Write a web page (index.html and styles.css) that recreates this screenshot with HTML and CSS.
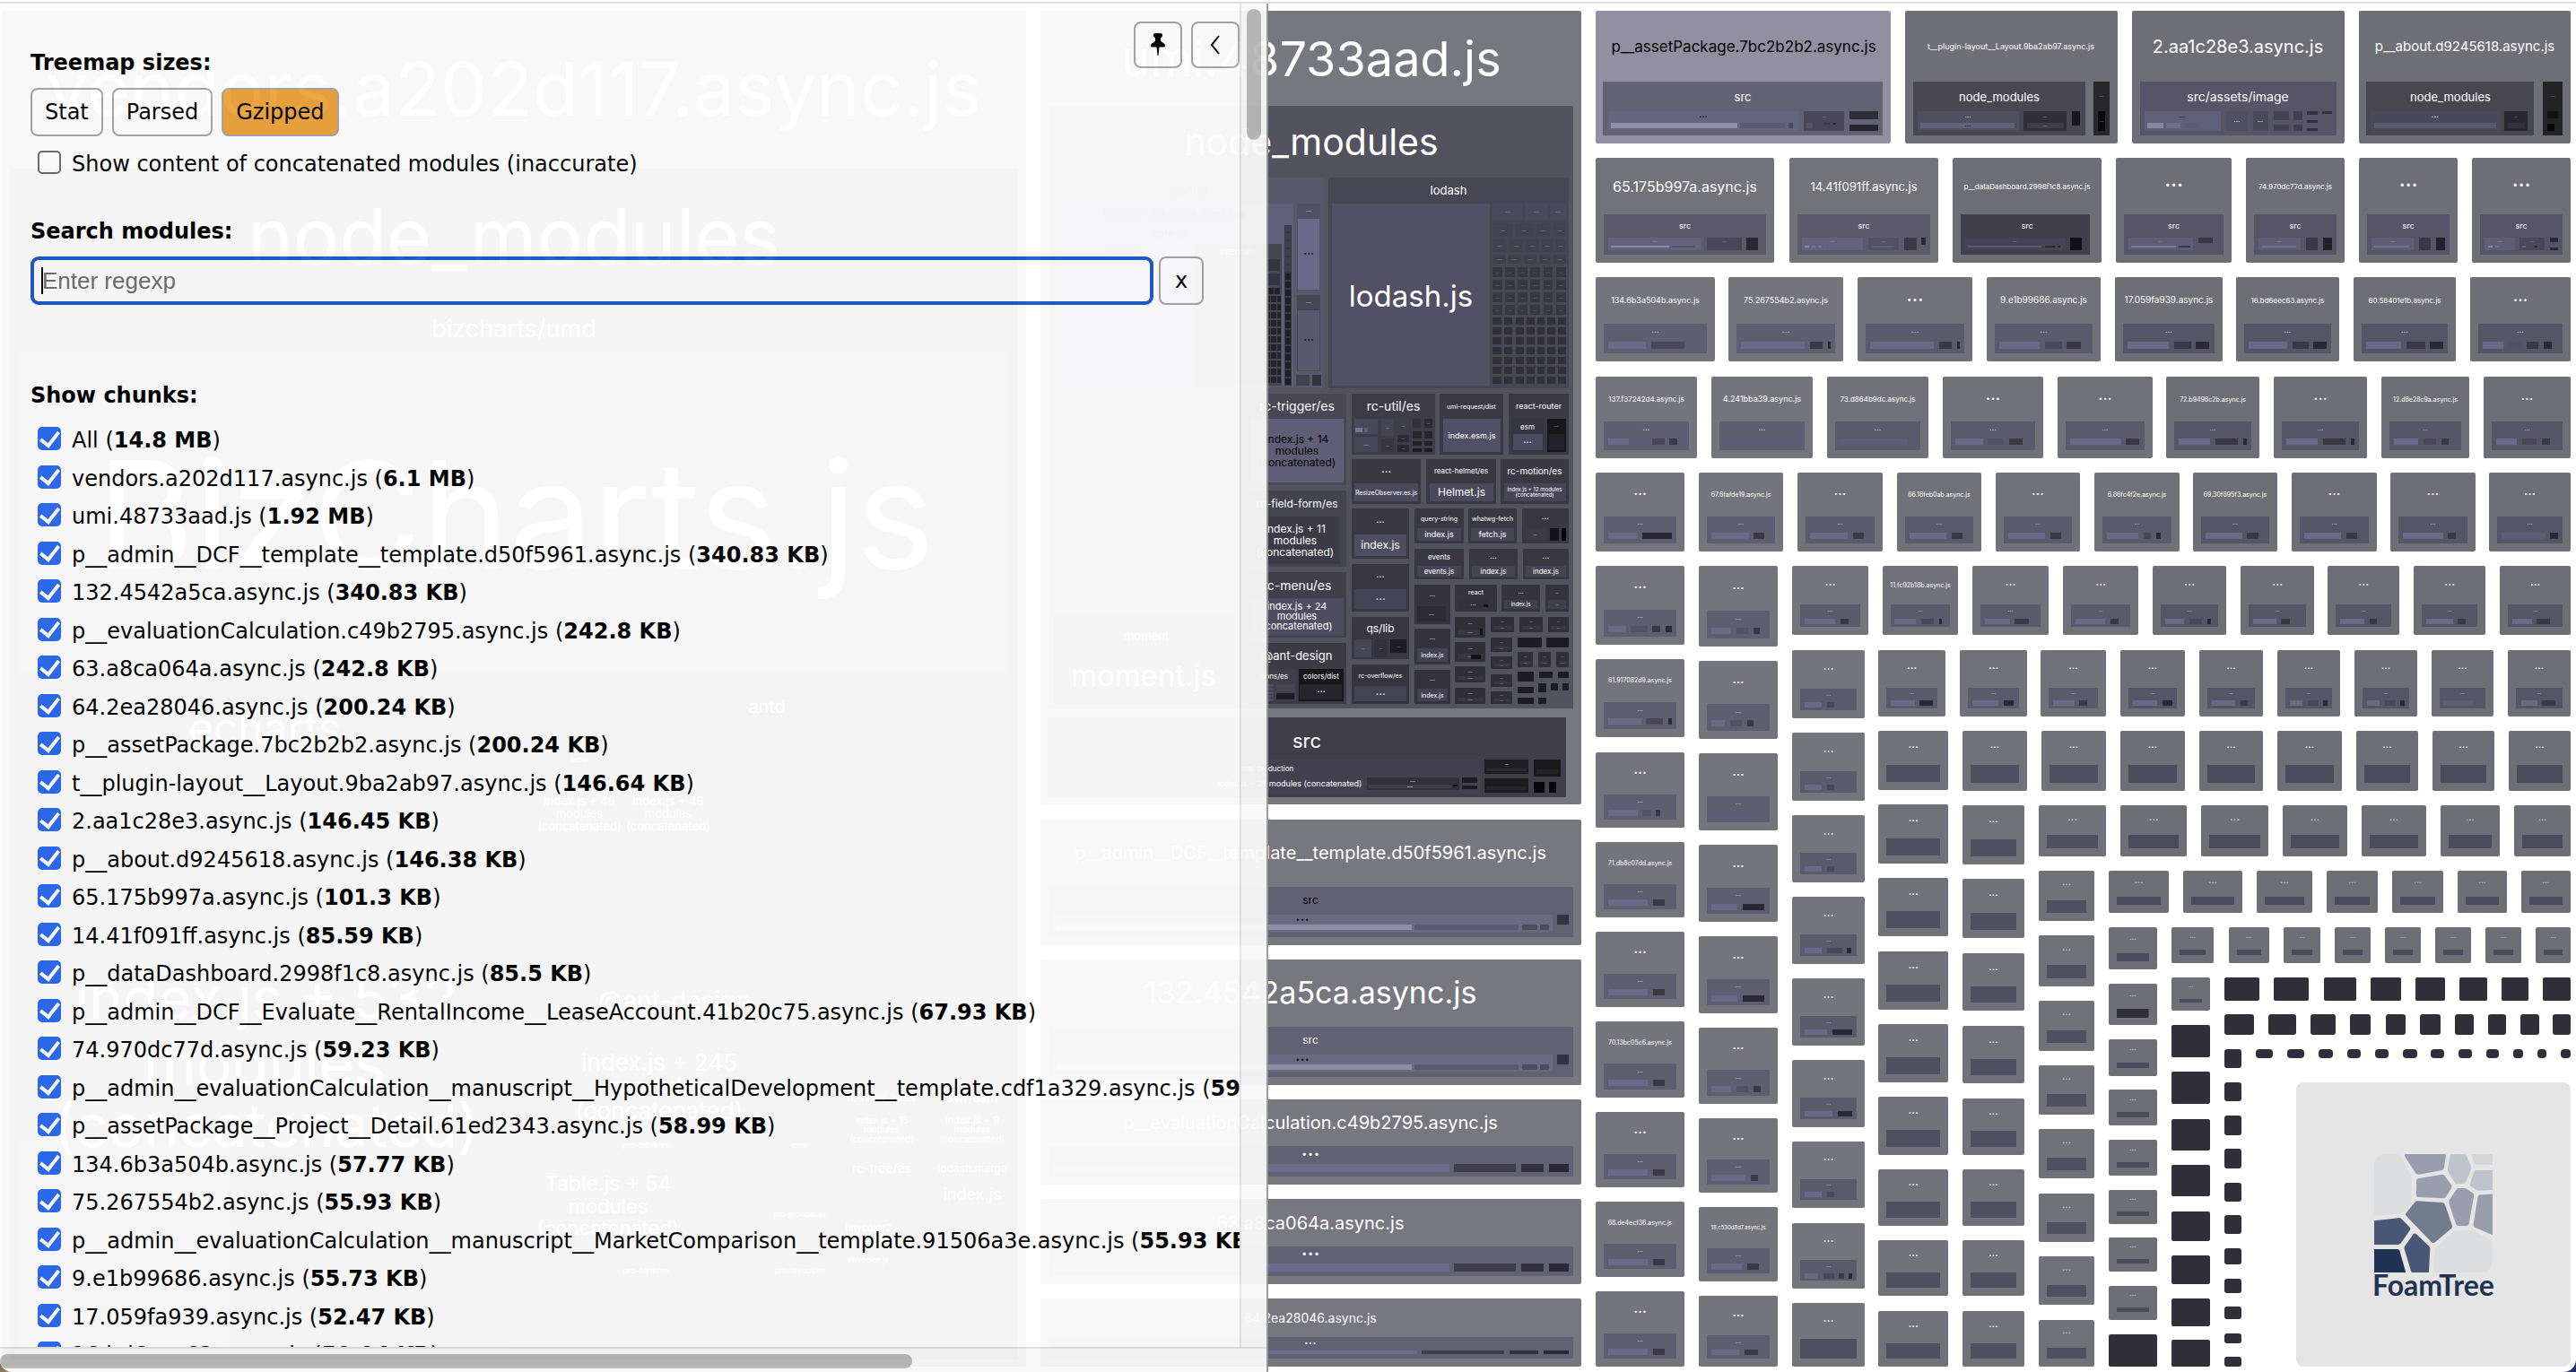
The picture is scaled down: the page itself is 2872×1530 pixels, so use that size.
FILE: index.html
```html
<!DOCTYPE html>
<html lang="en">
<head>
<meta charset="utf-8">
<title>Webpack Bundle Analyzer</title>
<link rel="stylesheet" href="styles.css">
</head>
<body>
<div class="app">
  <main class="treemap">
    <svg id="treemap" class="treemap-canvas" viewBox="0 0 2872 1526" preserveAspectRatio="xMinYMin meet" role="img" aria-label="Bundle treemap"></svg>
  </main>

  <aside class="sidebar">
    <div class="sidebar-body">
      <div class="toolbar">
        <button class="icon-button" type="button" aria-label="Pin sidebar">
          <svg width="16" height="26" viewBox="0 0 16 26"><path d="M3 2q0-2 2-2h6q2 0 2 2v1q0 1.500-2 2v4l3 2q2 1 2 3 0 1.500-2 1.500H9.500L8.500 25h-1l-1-9.500H2Q0 15.500 0 14q0-2 2-3l3-2V5Q3 4.500 3 3z"/></svg>
        </button>
        <button class="icon-button" type="button" aria-label="Hide sidebar">
          <svg width="12" height="22" viewBox="0 0 12 22"><path d="M10 1L2 11l8 10" fill="none" stroke="#000" stroke-width="2"/></svg>
        </button>
      </div>

      <section class="group sizes">
        <h2 class="group-title">Treemap sizes:</h2>
        <div class="size-buttons">
          <button class="button" type="button">Stat</button>
          <button class="button" type="button">Parsed</button>
          <button class="button active" type="button">Gzipped</button>
        </div>
        <label class="option"><input class="box" type="checkbox"><span>Show content of concatenated modules (inaccurate)</span></label>
      </section>

      <section class="group search">
        <h2 class="group-title"><label for="search">Search modules:</label></h2>
        <div class="search-row">
          <div class="search-field"><input id="search" class="search-input" type="text" placeholder="Enter regexp"></div>
          <button class="button clear" type="button" aria-label="Clear search">x</button>
        </div>
      </section>

      <section class="group chunks">
        <h2 class="group-title">Show chunks:</h2>
        <ul id="chunks" class="chunk-list"></ul>
      </section>
    </div>
    <div class="scroll-y"><div class="thumb"></div></div>
    <div class="scroll-x"><div class="thumb"></div></div>
  </aside>
</div>
<script src="treemap.js"></script>
</body>
</html>
```

FILE: styles.css
```css
* {
  box-sizing: border-box;
}

html {
  height: 100%;
  background: linear-gradient(to right, #8a7a5a 50%, #1c2f66 50%);
}

body {
  height: 100%;
  margin: 0;
  font: 24px/32px "DejaVu Sans", Verdana, sans-serif;
  color: #000;
}

.app {
  position: relative;
  height: 100%;
  overflow: hidden;
  padding-top: 2px;
  background: #fff;
  border-radius: 0 0 14px 14px;
}

.treemap {
  border-top: 2px solid #ddd;
  height: 100%;
}

.treemap-canvas {
  display: block;
  width: 100%;
  font-family: Inter, "Liberation Sans", sans-serif;
}

.treemap-canvas text {
  text-anchor: middle;
}

.treemap-canvas .brand {
  font-family: Lato, sans-serif;
  font-weight: 700;
}

/* Sidebar lies over the treemap and lets it shimmer through */
.sidebar {
  position: absolute;
  top: 4px;
  bottom: 0;
  left: 0;
  width: calc(50% - 22px);
  display: grid;
  grid-template: "body bar" minmax(0, 1fr) "foot foot" 28px / minmax(0, 1fr) 30px;
  background: #fff;
  border-right: 2px solid #999;
  opacity: 0.95;
}

.sidebar-body {
  grid-area: body;
  position: relative;
  overflow: hidden;
  padding: 18px 40px 0 34px;
}

.toolbar {
  position: absolute;
  top: 20px;
  right: 0;
  display: flex;
  gap: 10px;
}

.icon-button {
  display: grid;
  place-items: center;
  width: 54px;
  height: 52px;
  padding: 0;
  background: none;
  border: 2px solid #a5a5a5;
  border-radius: 8px;
}

.group-title {
  margin: 0;
  font-size: 24px;
  font-weight: 700;
  line-height: 32px;
}

.sizes {
  padding-top: 32px;
}

.size-buttons {
  display: flex;
  gap: 10px;
  margin-top: 12px;
}

.button {
  height: 54px;
  padding: 0 14px;
  background: none;
  border: 2px solid #a5a5a5;
  border-radius: 8px;
  font: inherit;
  color: #000;
}

.button.active {
  background: #eba238;
}

.option {
  display: flex;
  align-items: center;
  gap: 12px;
  height: 42px;
  padding-left: 8px;
  white-space: nowrap;
}

.sizes .option {
  margin-top: 10px;
}

.box {
  appearance: none;
  display: grid;
  place-items: center;
  flex: none;
  width: 26px;
  height: 26px;
  margin: 0 0 4px;
  background: #fff;
  border: 2px solid #6b6b6b;
  border-radius: 5px;
}

.box:checked {
  border: 0;
  background: #2a69ee;
}

.box:checked::before {
  content: "";
  width: 9px;
  height: 17px;
  margin-bottom: 4px;
  border: solid #fff;
  border-width: 0 4px 4px 0;
  transform: rotate(38deg);
}

.search {
  padding-top: 38px;
}

.search-row {
  display: flex;
  gap: 6px;
  margin-top: 12px;
}

.search-field {
  position: relative;
  flex: 1;
}

.search-field::before {
  content: "";
  position: absolute;
  top: 12px;
  left: 12px;
  width: 2px;
  height: 30px;
  background: #000;
}

.search-input {
  display: block;
  width: 100%;
  height: 54px;
  padding: 0 9px;
  background: none;
  border: 4px solid #1d59c6;
  border-radius: 9px;
  font: 26px "Liberation Sans", Arial, sans-serif;
}

.search-input::placeholder {
  color: #6e6e6e;
  opacity: 1;
}

.clear {
  width: 50px;
  padding: 0;
}

.chunks {
  padding-top: 85px;
}

.chunk-list {
  margin: 13px 0 0;
  padding: 0;
  list-style: none;
}

.chunk-list .option {
  height: 42px;
}

.chunk-list li:nth-child(even) .option {
  height: 43px;
}

.scroll-y {
  grid-area: bar;
  padding: 6px 6px 0;
  background: #f9f9f9;
  border-left: 2px solid #e4e4e4;
}

.scroll-x {
  grid-area: foot;
  padding: 6px 0 0;
  background: #f9f9f9;
  border-top: 2px solid #e0e0e0;
}

.thumb {
  background: #b8b8b8;
  border-radius: 8px;
}

.scroll-y .thumb {
  width: 16px;
  height: 146px;
}

.scroll-x .thumb {
  width: 72%;
  height: 16px;
}
```

FILE: treemap.js
```js
const chunks = [
  ["All", "14.8 MB"],
  ["vendors.a202d117.async.js", "6.1 MB"],
  ["umi.48733aad.js", "1.92 MB"],
  ["p__admin__DCF__template__template.d50f5961.async.js", "340.83 KB"],
  ["132.4542a5ca.async.js", "340.83 KB"],
  ["p__evaluationCalculation.c49b2795.async.js", "242.8 KB"],
  ["63.a8ca064a.async.js", "242.8 KB"],
  ["64.2ea28046.async.js", "200.24 KB"],
  ["p__assetPackage.7bc2b2b2.async.js", "200.24 KB"],
  ["t__plugin-layout__Layout.9ba2ab97.async.js", "146.64 KB"],
  ["2.aa1c28e3.async.js", "146.45 KB"],
  ["p__about.d9245618.async.js", "146.38 KB"],
  ["65.175b997a.async.js", "101.3 KB"],
  ["14.41f091ff.async.js", "85.59 KB"],
  ["p__dataDashboard.2998f1c8.async.js", "85.5 KB"],
  ["p__admin__DCF__Evaluate__RentalIncome__LeaseAccount.41b20c75.async.js", "67.93 KB"],
  ["74.970dc77d.async.js", "59.23 KB"],
  ["p__admin__evaluationCalculation__manuscript__HypotheticalDevelopment__template.cdf1a329.async.js", "59.12 KB"],
  ["p__assetPackage__Project__Detail.61ed2343.async.js", "58.99 KB"],
  ["134.6b3a504b.async.js", "57.77 KB"],
  ["75.267554b2.async.js", "55.93 KB"],
  ["p__admin__evaluationCalculation__manuscript__MarketComparison__template.91506a3e.async.js", "55.93 KB"],
  ["9.e1b99686.async.js", "55.73 KB"],
  ["17.059fa939.async.js", "52.47 KB"],
  ["16.bd6eec63.async.js", "50.94 KB"]
];

document.getElementById("chunks").innerHTML = chunks.map(([name, size]) =>
  `<li><label class="option"><input class="box" type="checkbox" checked><span>${name} (<b>${size}</b>)</span></label></li>`
).join("");

/* ---- treemap drawing ---- */
const FONT = 'Inter, "Liberation Sans", sans-serif';
const pen = document.createElement("canvas").getContext("2d");
pen.font = "100px " + FONT;
const out = [];

// Bar shades, from the lightest module to the darkest
const SHADE = { H: "#8d8ba2", L: "#6b6987", l: "#5e5c76", m: "#525165", M: "#4a4858", D: "#3a3844", K: "#2a2832", k: "#121116" };
const shade = c => SHADE[c] || c;

// Rectangle from its left, top, right and bottom edges
function box(x1, y1, x2, y2, color, r = 0) {
  out.push(`<rect x="${x1}" y="${y1}" width="${x2 - x1}" height="${y2 - y1}" rx="${r}" fill="${shade(color)}"/>`);
}

// Text centred on a point
function text(str, cx, cy, size, color = "#fff") {
  out.push(`<text x="${cx}" y="${Math.round(cy + size * 0.36)}" font-size="${size}" fill="${color}">${str}</text>`);
}

// Label set in the whole size at which it takes up the given width
function fit(str, cx, cy, width, color) {
  const size = 100 * width / pen.measureText(str).width;
  text(str, cx, cy, size < 12 ? Math.round(size + 0.3) : Math.round(size), color);
}

function dots(cx, cy, size, color = "#fff", opacity = 1) {
  out.push(`<text x="${cx}" y="${Math.round(cy + 1)}" font-size="${Math.max(4, Math.round(size))}" fill="${color}" opacity="${opacity}">…</text>`);
}

// A chunk whose folder holds a few bars
function cell(x1, y1, x2, y2, label, labelWidth, bars) {
  const w = x2 - x1, h = y2 - y1, cx = (x1 + x2) / 2;
  const grey = x1 < 2000 ? "#74747d" : x1 < 2350 ? "#717179" : "#6e6e76";
  box(x1, y1, x2, y2, grey, 2);
  const size = Math.min(w * 0.17, h * 0.25);
  const cy = y1 + h * 0.275;
  if (label) fit(label, cx, cy, labelWidth);
  else dots(cx, cy, size, "#fff", h > 60 ? 1 : 0.6);
  const top = Math.round(y1 + h * 0.49 + 5.5);
  if (!bars) {
    box(x1 + 9, top, x2 - 9, y2 - 9, x1 < 2300 ? "#504f62" : "#4c4b5d");
    return;
  }
  box(x1 + 9, top, x2 - 9, y2 - 9, x1 < 1990 ? "#5f5e70" : x1 < 2350 ? "#5b5a6a" : "#565565");
  dots(cx, y1 + h * 0.653, size * 0.45, "#fff", 0.7);
  const by = Math.round(y1 + h * 0.762), bh = Math.round(h * 0.08);
  bars.split(" ").forEach(b => {
    const [a, e] = b.slice(1).split("-").map(Number);
    box(a, by, e, by + bh, b[0]);
  });
}

const row = (y1, y2, cells) => cells.forEach(c => cell(c[0], y1, c[1], y2, c[2], c[3], c[4]));
const column = (x1, x2, cells) => cells.forEach(c => cell(x1, c[0], x2, c[1], c[2], c[3], c[4]));
const plain = list => list.split(" ").map(s => s.split("-").map(Number));

/* vendors */
box(2, 12, 1144, 1524, "#777780", 2);
fit("vendors.a202d117.async.js", 573, 99, 1037);
box(11, 188, 1135, 1516, "#3f3e47");
fit("node_modules", 573, 264, 594);
box(18, 340, 1128, 753, "#4a4955");
fit("bizcharts/umd", 573, 366, 182);
box(20, 391, 1124, 750, "#5b5b6e");
fit("BizCharts.js", 575, 574, 936);
box(18, 762, 572, 1510, "#43424e");
fit("echarts", 295, 812, 170);
box(22, 856, 568, 1506, "#4d4c60");
fit("index.js + 532", 297, 1113, 424);
fit("modules", 295, 1186, 270);
fit("(concatenated)", 297, 1255, 474);
box(580, 762, 1128, 1080, "#3b3a45");
fit("antd", 855, 788, 41);
fit("table", 646, 847, 17);
[646, 745].forEach(x => {
  box(x - 48, 856, x + 46, 945, "#4a4959");
  fit("index.js + 46", x, 893, 77);
  fit("modules", x, 907, 51);
  fit("(concatenated)", x, 921, 91);
});
for (let y = 956; y < 1060; y += 56)
  for (let x = 590; x < 1100; x += 88) box(x, y, x + 76, y + 46, "#4a4959");
box(580, 1090, 924, 1510, "#43424e");
text("@ant-design", 752, 1116, 28);
box(590, 1145, 920, 1260, "#4d4c60");
fit("index.js + 245", 735, 1185, 177);
fit("modules", 735, 1211, 110);
fit("(concatenated)", 735, 1239, 187);
box(590, 1284, 766, 1400, "#4d4c60");
fit("pro-table/es", 720, 1277, 48);
fit("icons", 892, 1277, 20);
fit("Table.js + 54", 678, 1320, 141);
fit("modules", 678, 1345, 90);
fit("(concatenated)", 678, 1369, 161);
fit("pro-provider/es", 892, 1354, 56);
fit("pro-form/es", 720, 1417, 48);
fit("pro-layout/es", 892, 1417, 53);
box(934, 1090, 1128, 1510, "#43424e");
[[983, "rc-virtual-list/es", "index.js + 15", 77], [1084, "swr/esm", "index.js + 9", 55]].forEach(([x, a, b, w]) => {
  fit(a, x, 1224, w);
  fit(b, x, 1249, 58);
  fit("modules", x, 1259, 40);
  fit("(concatenated)", x, 1270, 71);
});
fit("rc-tree/es", 983, 1303, 67);
fit("lodash.merge", 1084, 1303, 73);
fit("index.js", 1084, 1332, 64);
fit("tinycolor2", 968, 1369, 48);
fit("tinycolor.js", 968, 1405, 42);

/* umi */
box(1160, 12, 1763, 897, "#777780", 2);
fit("umi.48733aad.js", 1462, 66, 422);
box(1169, 118, 1754, 790, "#53525f");
fit("node_modules", 1462, 158, 281);
box(1175, 198, 1476, 433, "#59586a", 2);
fit("@umijs", 1325, 212, 45, "#000");
box(1178, 227, 1442, 430, "#605f77");
fit("bundler-utils/node_modules", 1309, 239, 164, "#000");
fit("core-js", 1304, 261, 39, "#000");
fit("modules", 1255, 280, 40, "#000");
box(1332, 272, 1429, 430, "#464552");
fit("internals", 1380, 280, 40);
box(1175, 686, 1378, 785, "#47464f");
fit("moment", 1278, 709, 50);
fit("moment.js", 1275, 753, 163);
for (let y = 289; y < 428; y += y < 320 ? 16 : 9)
  for (let x = y < 330 ? 1414 : 1410; x < 1427; x += y < 320 ? 15 : 7)
    box(x, y, Math.min(x + (y < 320 ? 13 : 6), 1428), y + (y < 320 ? 13 : 7), y < 320 ? "#353441" : "#24232c");
box(1432, 251, 1440, 430, "#373643");
for (let y = 251; y < 426; y += 9) box(1433, y, 1439, y + 7, y < 300 ? "#3f3e4b" : "#1f1e26");
box(1446, 227, 1472, 324, "#525163");
box(1447, 244, 1471, 323, "#6b6987");
dots(1459, 283, 14, "#000");
box(1446, 329, 1472, 414, "#474655");
box(1447, 346, 1471, 413, "#5a586e");
dots(1459, 379, 14, "#000");
dots(1459, 235, 7, "#fff", 0.7);
dots(1459, 337, 7, "#fff", 0.7);
box(1445, 418, 1460, 430, "#42414f");
box(1463, 418, 1473, 430, "#33323e");

box(1481, 198, 1749, 433, "#474655", 2);
fit("lodash", 1615, 212, 41);
box(1485, 227, 1661, 430, "#515065");
fit("lodash.js", 1573, 330, 138);
[
  [227, 245, "1664-1698 1700-1726 1728-1746"],
  [249, 264, "1664-1687 1689-1709 1713-1728 1732-1746"],
  [267, 281, "1664-1679 1683-1698 1701-1716 1719-1731 1734-1746"],
  [284, 294, "1664-1679 1681-1696 1699-1713 1717-1728 1732-1746"]
].forEach(([y1, y2, xs], i) => plain(xs).forEach(([a, b]) => {
  box(a, y1, b, y2, i < 1 ? "#4b4a5a" : i < 3 ? "#434250" : "#3f3e4b");
  dots((a + b) / 2, (y1 + y2) / 2, 6, "#fff", 0.5);
}));
for (let y = 298; y < 350; y += 14)
  plain("1664-1675 1678-1689 1692-1703 1706-1717 1721-1731 1735-1746").forEach(([a, b]) => {
    box(a, y, b, y + 11, "#373643");
    dots((a + b) / 2, y + 6, 5, "#fff", 0.3);
  });
for (let y = 354; y < 428; y += 11)
  plain("1664-1674 1677-1686 1690-1699 1702-1711 1714-1722 1725-1734 1737-1746").forEach(([a, b]) => box(a, y, b, y + 8, "#302f3a"));

// Package holding one file or a few bars: edges, title, title width, files
function pack(x1, y1, x2, y2, color, label, width, files) {
  box(x1, y1, x2, y2, color, 1);
  const top = files.length ? files[0][1] : y2;
  const cx = (x1 + x2) / 2, cy = (y1 + top) / 2;
  if (label) fit(label, cx, cy, width);
  else dots(cx, cy, Math.min(16, (x2 - x1) * 0.17), "#fff", 0.9);
  files.forEach(([a, b, c, d, fill, name, w]) => {
    box(a, b, c, d, fill);
    if (name === "…") dots((a + c) / 2, (b + d) / 2, Math.min(14, (c - a) * 0.22), "#fff", 0.8);
    else if (name) fit(name, (a + c) / 2, (b + d) / 2, w);
  });
}
const lines = (rows, cx, cy, step, size, color) => rows.forEach((r, i) => text(r, cx, cy + i * step, size, color));

pack(1391, 439, 1501, 541, "#484753", "rc-trigger/es", 84, [[1394, 467, 1498, 538, "#5f5e76"]]);
lines(["index.js + 14", "modules", "(concatenated)"], 1446, 490, 13, 12, "#000");
pack(1391, 547, 1501, 632, "#444350", "rc-field-form/es", 92, [[1394, 576, 1494, 629, "#3b3a46"]]);
lines(["index.js + 11", "modules", "(concatenated)"], 1444, 590, 13, 12);
pack(1391, 638, 1501, 711, "#403f4b", "rc-menu/es", 79, [[1394, 667, 1498, 709, "#4e4d62"]]);
lines(["index.js + 24", "modules", "(concatenated)"], 1446, 676, 11, 11);
pack(1391, 717, 1501, 785, "#3b3a45", "@ant-design", 80, [[1394, 746, 1445, 782, "#3f3e4b"], [1448, 746, 1498, 782, "#17161b"]]);
fit("icons/es", 1420, 754, 32);
fit("colors/dist", 1473, 754, 37);
box(1449, 763, 1496, 780, "#26252d");
dots(1473, 771, 11);
box(1423, 763, 1443, 771, "#464554");
box(1423, 773, 1443, 780, "#1d1c23");
for (let y = 763; y < 780; y += 4) box(1414, y, 1420, y + 3, "#4d4c5e");

pack(1507, 439, 1600, 507, "#3d3c48", "rc-util/es", 60, [
  [1510, 467, 1536, 484, "#4a495a"], [1540, 467, 1554, 486, "#454455", "…"], [1558, 467, 1571, 482, "#3f3e4b", "…"],
  [1575, 467, 1584, 477, "#32313c"], [1588, 467, 1597, 477, "#2b2a33", "…"], [1510, 487, 1536, 504, "#474657", "…"],
  [1540, 489, 1554, 504, "#363541", "…"], [1558, 485, 1571, 493, "#2d2c36", "…"], [1558, 496, 1571, 504, "#28272f", "…"],
  [1575, 481, 1585, 489, "#26252d"], [1588, 481, 1597, 489, "#26252d"], [1575, 492, 1585, 497, "#222128"],
  [1588, 492, 1597, 497, "#222128"], [1575, 500, 1585, 504, "#1b1a20"], [1588, 500, 1597, 504, "#1b1a20"]
]);
box(1511, 477, 1519, 482, "#77759a");
box(1521, 477, 1525, 482, "#605e7a");
pack(1605, 439, 1676, 507, "#3b3a44", "umi-request/dist", 54, [[1609, 467, 1673, 504, "#504f66", "index.esm.js", 52]]);
pack(1682, 439, 1749, 507, "#3b3a44", "react-router", 50, [[1685, 467, 1722, 504, "#363542"], [1725, 467, 1746, 504, "#17161b"]]);
fit("esm", 1703, 476, 15);
box(1687, 484, 1720, 502, "#4b4a5e");
dots(1703, 493, 11);
dots(1735, 475, 6, "#fff", 0.6);
box(1727, 484, 1744, 502, "#24232b");
pack(1507, 512, 1584, 562, "#3a3943", "", 0, [[1510, 539, 1581, 559, "#4b495d", "ResizeObserver.es.js", 64]]);
pack(1590, 512, 1668, 562, "#3a3943", "react-helmet/es", 60, [[1594, 539, 1665, 559, "#4b495d", "Helmet.js", 52]]);
pack(1673, 512, 1749, 562, "#3a3943", "rc-motion/es", 59, [[1677, 539, 1746, 559, "#464556"]]);
fit("index.js + 12 modules", 1711, 546, 61);
fit("(concatenated)", 1711, 552, 42);
pack(1507, 567, 1571, 623, "#3a3943", "", 0, [[1510, 596, 1568, 620, "#4e4d62", "index.js", 45]]);
pack(1507, 629, 1571, 682, "#393842", "", 0, [[1510, 657, 1568, 679, "#444354", "…"]]);
pack(1507, 688, 1571, 735, "#393842", "qs/lib", 31, [[1510, 713, 1529, 733, "#464556", "…"], [1532, 713, 1547, 733, "#32313c", "…"], [1550, 713, 1568, 728, "#1d1c22", "…"]]);
pack(1507, 741, 1571, 785, "#36353f", "rc-overflow/es", 50, [[1510, 765, 1568, 782, "#444354", "…"]]);
pack(1577, 567, 1632, 606, "#393842", "query-string", 41, [[1580, 589, 1629, 603, "#464556", "index.js", 31]]);
pack(1637, 567, 1691, 606, "#393842", "whatwg-fetch", 41, [[1640, 589, 1688, 603, "#464556", "fetch.js", 31]]);
pack(1697, 567, 1749, 606, "#393842", "", 0, [[1700, 589, 1723, 603, "#3b3a46", "…"], [1728, 589, 1738, 603, "#131217"], [1741, 589, 1746, 603, "#060507"]]);
pack(1577, 612, 1632, 646, "#393842", "events", 23, [[1580, 631, 1629, 643, "#454455", "events.js", 31]]);
pack(1638, 612, 1692, 646, "#393842", "", 0, [[1641, 631, 1689, 643, "#454455", "index.js", 26]]);
pack(1698, 612, 1749, 646, "#393842", "", 0, [[1701, 631, 1746, 643, "#454455", "index.js", 26]]);
pack(1577, 652, 1617, 696, "#35343e", "", 0, [[1580, 676, 1612, 693, "#2d2c36", "…"]]);
pack(1577, 701, 1617, 741, "#35343e", "", 0, [[1580, 723, 1614, 738, "#444353", "index.js", 25]]);
pack(1577, 747, 1617, 785, "#33323c", "", 0, [[1580, 768, 1614, 782, "#434252", "index.js", 25]]);
pack(1622, 652, 1669, 682, "#35343e", "react", 15, [[1626, 669, 1659, 679, "#32313c", "…"]]);
box(1654, 674, 1659, 677, "k");
pack(1674, 652, 1717, 682, "#35343e", "", 0, [[1677, 669, 1714, 679, "#403f4d", "index.js", 22]]);
pack(1723, 652, 1749, 682, "#35343e", "", 0, [[1726, 669, 1746, 679, "#403f4d", "…"]]);
[[1622, 688, 1656, 711], [1622, 716, 1656, 738], [1622, 743, 1656, 761], [1622, 767, 1656, 785],
 [1662, 688, 1688, 705], [1694, 688, 1720, 705], [1726, 688, 1749, 705],
 [1662, 711, 1686, 727], [1662, 732, 1686, 746], [1662, 752, 1686, 766], [1662, 771, 1686, 785],
 [1692, 727, 1709, 744], [1715, 727, 1729, 744], [1735, 727, 1749, 744]
].forEach(([a, b, c, d]) => pack(a, b, c, d, "#302f38", "", 0, [[a + 3, Math.round(b + (d - b) * 0.6), c - 3, d - 3, "#383743", "…"]]));
box(1650, 701, 1653, 708, "k");
box(1640, 730, 1651, 735, "k");
[[1692, 711, 1719, 722], [1724, 711, 1749, 722], [1692, 749, 1710, 760], [1716, 749, 1731, 756], [1737, 749, 1749, 756],
 [1692, 766, 1710, 773], [1715, 762, 1724, 772], [1729, 762, 1737, 770], [1742, 762, 1749, 770], [1692, 778, 1710, 785], [1715, 778, 1724, 785]
].forEach(([a, b, c, d]) => box(a, b, c, d, "#1d1c23", 1));

box(1168, 800, 1746, 889, "#403f49");
fit("src", 1457, 826, 32);
box(1175, 847, 1650, 885, "#434150");
fit(".umi-production", 1412, 857, 62);
fit("index.js + 29 modules (concatenated)", 1438, 874, 152);
box(1524, 867, 1627, 881, "#31303b");
box(1526, 875, 1618, 879, "#3f3e4c");
dots(1575, 871, 7);
dots(1572, 877, 7);
box(1620, 875, 1625, 877, "k");
box(1630, 867, 1647, 873, "#1d1c23");
box(1630, 876, 1647, 880, "#1d1c23");
box(1655, 847, 1704, 863, "#1f1e23");
box(1657, 857, 1702, 860, "#2b2a32");
dots(1680, 852, 5);
box(1655, 868, 1704, 884, "#1c1b20");
box(1657, 877, 1701, 881, "#24232a");
box(1710, 847, 1740, 866, "#19181c");
box(1713, 858, 1737, 863, "#24232a");
box(1710, 872, 1722, 884, "#060507");
box(1727, 872, 1735, 884, "#060507");

/* wide chunks below umi */
function wide(y1, y2, label, width, labelY, top, bars) {
  box(1160, y1, 1763, y2, "#77777f", 2);
  fit(label, 1461, labelY, width);
  box(1169, top, 1754, y2 - 9, "#626173");
  bars.forEach(b => box(...b));
}
const pageBars = y => [
  [1175, y, 1731, y + 19, "#6b6a82"], [1178, y + 11, 1574, y + 17, "#8f8da4"], [1577, y + 11, 1693, y + 17, "#5b5a70"],
  [1697, y + 11, 1714, y + 17, "#4d4b5e"], [1717, y + 11, 1727, y + 17, "#4d4b5e"], [1736, y, 1749, y + 11, "#343240"]
];
const lineBars = (y, h, a, b, c) => [
  [1175, y, a, y + h, "#6d6b89"], [a + 5, y, b, y + h, "#3e3d49"], [b + 6, y, c, y + h, "#32303c"], [c + 6, y, 1749, y + h, "#2b2933"]
];
wide(914, 1054, "p__admin__DCF__template__template.d50f5961.async.js", 539, 951, 989, pageBars(1020));
fit("src", 1461, 1004, 18, "#000");
dots(1452, 1026, 18, "#000");
wide(1070, 1210, "132.4542a5ca.async.js", 366, 1107, 1145, pageBars(1176));
fit("src", 1461, 1160, 18);
dots(1452, 1182, 18, "#000");
wide(1226, 1321, "p__evaluationCalculation.c49b2795.async.js", 428, 1252, 1278, lineBars(1298, 9, 1616, 1690, 1721));
dots(1461, 1288, 24);
wide(1337, 1432, "63.a8ca064a.async.js", 210, 1364, 1390, lineBars(1409, 9, 1616, 1690, 1721));
dots(1461, 1399, 24);
wide(1448, 1524, "64.2ea28046.async.js", 152, 1470, 1491, lineBars(1506, 4, 1580, 1677, 1715));
dots(1461, 1498, 16);

/* row 1 */
box(1779, 12, 2108, 160, "#918fa0", 2);
fit("p__assetPackage.7bc2b2b2.async.js", 1944, 52, 288, "#000");
box(1787, 91, 2099, 151, "#626274");
fit("src", 1943, 108, 19);
box(1793, 124, 2005, 146, "#666580");
dots(1899, 130, 11, "#000");
box(1796, 137, 1937, 143, "#908ea2"); box(1940, 137, 1990, 143, "#5b5a6e"); box(1994, 137, 1999, 143, "#4c4a5c");
box(2011, 124, 2056, 146, "#484657"); box(2014, 137, 2021, 143, "#56546b"); box(2033, 137, 2040, 139, "D"); box(2043, 137, 2047, 139, "K");
dots(2034, 130, 5, "#fff", 0.5);
box(2062, 124, 2094, 133, "#2f2d38"); box(2062, 139, 2094, 146, "#26242e");

box(2124, 12, 2361, 160, "#6f6f77", 2);
fit("t__plugin-layout__Layout.9ba2ab97.async.js", 2242, 52, 175);
box(2133, 91, 2325, 151, "#484752");
fit("node_modules", 2229, 108, 92);
box(2138, 124, 2251, 146, "#504f60"); box(2141, 137, 2246, 143, "#62617a"); dots(2194, 130, 8); dots(2194, 140, 8, "#000");
box(2256, 124, 2304, 146, "#302f39"); box(2260, 137, 2301, 143, "#3f3e4b"); dots(2280, 130, 5, "#fff", 0.6); dots(2280, 140, 5, "#fff", 0.6);
box(2310, 124, 2319, 140, "#17161c");
box(2334, 91, 2352, 151, "#28272c"); box(2339, 124, 2347, 146, "#0a090c"); dots(2343, 107, 5, "#fff", 0.5); dots(2343, 135, 5, "#fff", 0.5);

box(2377, 12, 2614, 160, "#6e6e76", 2);
fit("2.aa1c28e3.async.js", 2495, 52, 188);
box(2386, 91, 2605, 151, "#565466");
fit("src/assets/image", 2495, 108, 112);
box(2391, 124, 2476, 146, "#605f78"); dots(2433, 130, 8, "#000");
box(2394, 137, 2412, 143, "#88869b"); box(2415, 137, 2431, 143, "#6f6d8b"); box(2435, 137, 2450, 143, "#5c5b70");
box(2482, 124, 2506, 146, "#504f60"); dots(2494, 135, 8); box(2512, 124, 2529, 146, "#494857"); dots(2520, 135, 7);
box(2535, 124, 2552, 134, "#42414e"); box(2535, 139, 2552, 146, "#42414e"); box(2557, 124, 2567, 134, "#403f4b"); box(2557, 139, 2567, 146, "#403f4b");
box(2572, 124, 2584, 128, "#32313b"); box(2572, 134, 2584, 137, "#32313b"); box(2572, 143, 2584, 146, "#32313b"); box(2589, 124, 2600, 127, "#32313b");

box(2630, 12, 2866, 160, "#6e6e76", 2);
fit("p__about.d9245618.async.js", 2748, 52, 199);
box(2638, 91, 2825, 151, "#484750");
fit("node_modules", 2732, 108, 92);
box(2643, 124, 2787, 146, "#4a495a"); box(2647, 137, 2783, 143, "#5a5970"); dots(2715, 130, 9);
box(2792, 124, 2818, 146, "#292831"); box(2796, 137, 2815, 143, "#34323f"); dots(2805, 130, 4, "#fff", 0.5);
box(2835, 91, 2857, 151, "#232227"); box(2840, 124, 2852, 132, "#111015"); box(2840, 138, 2848, 146, "#060507"); dots(2846, 107, 6, "#fff", 0.5);

/* row 2 */
const SUB = "#64627d";
[
  [1779, 1978, "65.175b997a.async.js", 162, "#5b596a", [[1793, 1897, SUB], [1903, 1942, "M"], [1947, 1960, "K"]], [[1796, 1861, "H"], [1864, 1889, "m"]]],
  [1995, 2161, "14.41f091ff.async.js", 123, "#5b596a", [[2009, 2077, SUB], [2083, 2117, "m"], [2123, 2137, "D"]], [[2012, 2017, "H"], [2020, 2024, "#7a7892"], [2027, 2031, "#747290"], [2034, 2036, "L"], [2087, 2111, "#5c5a74"]]],
  [2177, 2343, "p__dataDashboard.2998f1c8.async.js", 130, "#413f4c", [[2191, 2302, "#464454"], [2308, 2321, "k"]], [[2194, 2276, "#5a5870"], [2280, 2291, "K"], [2294, 2297, "K"]]],
  [2359, 2488, "", 0, "#565466", [[2373, 2445, "#5f5d76"]], [[2376, 2426, "#7d7b98"], [2429, 2442, "D"]]],
  [2504, 2614, "74.970dc77d.async.js", 76, "#565466", [[2518, 2565, "#605e76"], [2571, 2584, "D"], [2590, 2600, "#22212a"]], [[2521, 2560, "#716f8b"]]],
  [2630, 2740, "", 0, "#565466", [[2644, 2691, "#605e76"], [2697, 2710, "D"], [2716, 2726, "#22212a"]], [[2647, 2686, "#716f8b"]]],
  [2756, 2866, "", 0, "#565466", [[2770, 2804, "#605e76"], [2809, 2837, "M"]], [[2774, 2779, "H"], [2782, 2787, "#6f6d8b"], [2812, 2816, "L"], [2826, 2829, "K"]]]
].forEach(([x1, x2, label, width, fill, subs, bars], i) => {
  const cx = (x1 + x2) / 2;
  box(x1, 176, x2, 293, i < 2 ? "#727279" : "#6e6e76", 2);
  if (label) fit(label, cx, 208, width); else dots(cx, 207, 24);
  box(x1 + 9, 239, i === 2 ? 2330 : x2 - 9, 284, fill);
  text("src", cx, 252, 9);
  subs.forEach(([a, b, c]) => { box(a, 265, b, 279, c); if (b - a > 25) dots((a + b) / 2, 269, 5, "#fff", 0.4); });
  bars.forEach(([a, b, c]) => box(a, 274, b, 276, c));
});
box(2142, 265, 2147, 273, "K");
box(2451, 265, 2467, 271, "D");
box(2843, 265, 2852, 270, "K");
box(2843, 276, 2852, 279, "K");

row(309, 403, [
  [1779, 1912, "134.6b3a504b.async.js", 100, "L1793-1835 M1841-1878"],
  [1927, 2055, "75.267554b2.async.js", 95, "L1941-2012 D2018-2032 K2038-2041"],
  [2071, 2199, "", 0, "L2085-2156 D2162-2176 K2182-2185"],
  [2215, 2342, "9.e1b99686.async.js", 97, "L2229-2274 M2280-2299 D2304-2320"],
  [2358, 2478, "17.059fa939.async.js", 92, "L2372-2418 D2424-2443 K2448-2463"],
  [2493, 2608, "16.bd6eec63.async.js", 83, "L2507-2550 D2556-2574 K2579-2594"],
  [2624, 2738, "60.58401e1b.async.js", 83, "L2638-2677 D2683-2704 K2709-2724"],
  [2754, 2866, "", 0, "L2768-2791 m2797-2811 D2817-2830 K2836-2845"]
]);
row(420, 511, [
  [1779, 1892, "137.f37242d4.async.js", 84, "L1793-1816 l1822-1837 M1842-1856 D1861-1870"],
  [1908, 2021, "4.241bba39.async.js", 85, "l1922-1998"],
  [2037, 2150, "73.d864b9dc.async.js", 82, "l2051-2127"],
  [2166, 2278, "", 0, "L2180-2211 m2216-2234 D2240-2255"],
  [2294, 2400, "", 0, "L2308-2365 D2370-2385"],
  [2415, 2519, "72.b9498c2b.async.js", 73, "L2429-2464 D2470-2495 K2501-2505"],
  [2535, 2639, "", 0, "L2549-2584 D2590-2615 K2621-2625"],
  [2655, 2753, "12.d8e28c9a.async.js", 72, "L2669-2696 M2702-2716 D2722-2730"],
  [2769, 2866, "", 0, "L2783-2806 M2812-2828 D2834-2843"]
]);
row(527, 615, [
  [1779, 1878, "", 0, "L1793-1826 K1831-1864"],
  [1894, 1988, "67.6fafde19.async.js", 65, "L1908-1950 D1955-1967"],
  [2004, 2099, "", 0, "L2018-2060 D2066-2078"],
  [2115, 2209, "66.18feb0ab.async.js", 66, "L2129-2170 D2176-2188"],
  [2225, 2319, "", 0, "L2239-2280 D2286-2298"],
  [2335, 2430, "6.86fc4f2e.async.js", 62, "L2349-2384 M2390-2398 K2404-2409"],
  [2445, 2539, "69.30f895f3.async.js", 67, "L2459-2500 D2505-2518"],
  [2555, 2650, "", 0, "L2569-2610 D2616-2628"],
  [2665, 2760, "", 0, "L2679-2724 D2729-2738"],
  [2775, 2866, "", 0, "l2789-2838 K2843-2852"]
]);
column(1779, 1878, [
  [631, 719, "", 0, "L1793-1813 m1818-1837 D1842-1851 K1857-1864"],
  [735, 822, "61.917082d9.async.js", 66, "L1793-1830 M1835-1854 K1860-1864"],
  [839, 923, "", 0, "L1793-1826 m1831-1841 D1846-1851"],
  [939, 1023, "71.db8c07dd.async.js", 71, "L1793-1837 D1843-1856"],
  [1039, 1123, "", 0, "L1793-1837 D1843-1856"],
  [1139, 1224, "70.13bc05c6.async.js", 71, "L1793-1837 D1843-1856"],
  [1240, 1324, "", 0, "L1793-1837 D1843-1856"],
  [1340, 1424, "68.de4ecf36.async.js", 71, "L1793-1837 D1843-1856"],
  [1440, 1524, "", 0, "L1793-1837 D1843-1856"]
]);
column(1894, 1982, [
  [631, 721, "", 0, "L1908-1930 m1936-1949 D1955-1962"],
  [737, 824, "", 0, "L1908-1923 m1929-1942 D1948-1955"],
  [840, 926, "", 0, "l1908-1961"],
  [942, 1028, "", 0, "L1908-1937 K1943-1967"],
  [1044, 1130, "", 0, "L1908-1937 K1943-1967"],
  [1146, 1231, "", 0, "L1908-1930 m1936-1949 D1955-1963"],
  [1247, 1330, "", 0, "L1908-1946 D1952-1960"],
  [1346, 1429, "18.c530d8d7.async.js", 62, "L1908-1942 D1948-1961"],
  [1445, 1524, "", 0, "L1908-1939 D1945-1960"]
]);
row(631, 708, [
  [1998, 2083, "", 0, "L2012-2046 D2052-2061"],
  [2099, 2183, "11.fc92b18b.async.js", 60, "L2112-2136 M2142-2156 K2162-2165"],
  [2199, 2284, "", 0, "L2213-2241 D2246-2262"],
  [2300, 2384, "", 0, "L2314-2347 D2353-2362"],
  [2400, 2482, "", 0, "L2414-2435 M2441-2455 K2461-2465"],
  [2498, 2580, "", 0, "L2512-2538 D2543-2553"],
  [2595, 2675, "", 0, "L2609-2636 D2642-2650"],
  [2691, 2771, "", 0, "L2705-2735 D2740-2749"],
  [2787, 2866, "", 0, "L2801-2823 D2828-2843"]
]);
column(1998, 2079, [
  [725, 801, "", 0, "L2012-2031 M2037-2045"],
  [817, 893, "", 0, "L2012-2031 M2037-2045"],
  [909, 984, "", 0, "L2012-2031 M2037-2045"],
  [1000, 1075, "", 0, "L2012-2031 M2037-2054 K2059-2064"],
  [1091, 1166, "", 0, "L2012-2037 K2043-2065"],
  [1182, 1257, "", 0, "L2012-2043 K2049-2065"],
  [1273, 1347, "", 0, "L2012-2031 M2037-2045"],
  [1364, 1437, "", 0, "L2012-2027 M2033-2045 D2050-2056 K2061-2065"],
  [1453, 1524]
]);
row(725, 799, [
  [2094, 2169, "", 0, "L2108-2135 K2140-2155"],
  [2185, 2260, "", 0, "L2199-2228 K2234-2245"],
  [2275, 2348, "", 0, "L2289-2313 D2318-2327"],
  [2364, 2436, "", 0, "L2378-2405 K2411-2422"],
  [2452, 2523, "", 0, "L2466-2492 D2498-2506"],
  [2539, 2609, "", 0, "L2553-2567 M2573-2585 K2590-2595"],
  [2625, 2695, "", 0, "L2639-2653 M2659-2671 K2676-2681"],
  [2711, 2780, "", 0, "l2724-2757"],
  [2796, 2866, "", 0, "L2811-2829 D2834-2849"]
]);
column(2094, 2172, plain("815-881 897-963 979-1044 1061-1126 1142-1207 1223-1288 1304-1367 1383-1445 1462-1524"));
row(815, 882, plain("2188-2260 2276-2348 2364-2436 2452-2523 2539-2611 2627-2696 2712-2781 2797-2866"));
column(2188, 2257, plain("898-964 980-1046 1063-1127 1144-1208 1225-1288 1304-1367 1383-1445 1462-1524"));
row(898, 955, plain("2273-2348 2364-2438 2454-2529 2545-2617 2633-2705 2721-2787 2803-2866"));
column(2273, 2335, plain("971-1027 1043-1100 1116-1172 1188-1243 1259-1314 1331-1385 1401-1455 1472-1524"));
row(971, 1018, plain("2351-2418 2434-2500 2516-2578 2594-2651 2667-2724 2740-2795 2811-2866"));
column(2351, 2405, plain("1034-1081 1097-1143 1159-1200 1215-1255 1271-1311 1327-1365 1380-1418 1434-1472"));
box(2360, 1125, 2395, 1135, "#2f2e3a");
row(1034, 1074, plain("2421-2468 2485-2530 2546-2587 2603-2643 2659-2699 2715-2755 2771-2811 2827-2866"));
column(2421, 2464, plain("1090-1127"));

/* chunks too small to open up */
const INK = "#302f3a";
box(2351, 1488, 2405, 1524, INK, 2);
plain("1143-1179 1195-1231 1248-1283 1299-1334 1351-1384 1400-1432 1448-1479 1494-1524").forEach(([a, b]) => box(2421, a, 2464, b, INK, 2));
plain("2480-2519 2535-2574 2591-2627 2643-2677 2693-2726 2742-2773 2789-2819 2835-2866").forEach(([a, b]) => box(a, 1090, b, 1116, INK, 2));
plain("2480-2513 2529-2560 2576-2604 2620-2643 2660-2682 2698-2721 2737-2758 2774-2794 2810-2831 2846-2866").forEach(([a, b]) => box(a, 1131, b, 1154, INK, 3));
plain("2515-2534 2550-2569 2585-2601 2617-2632 2648-2663 2679-2695 2710-2725 2741-2756 2772-2786 2802-2813 2829-2839 2855-2866").forEach(([a, b]) => box(a, 1170, b, 1180, INK, 4));
plain("1170-1191 1207-1228 1244-1266 1281-1303 1319-1340 1355-1376 1392-1410 1426-1442 1457-1471 1487-1498 1513-1524").forEach(([a, b]) => box(2480, a, 2499, b, INK, 3));

/* FoamTree logo */
box(2560, 1207, 2866, 1524, "#e5e5e5", 8);
out.push(`<svg x="2647" y="1287" width="132" height="132" viewBox="928 830 375 396" preserveAspectRatio="none">
<path fill="#dcdddf" d="M955 831H1003Q1010 833 1014 841L1045 903Q1048 908 1047 915L1046 990Q1045 997 1041 1002L1020 1025Q1016 1028 1010 1029L935 1036Q928 1036 928 1030V865Q930 838 955 831Z"/>
<path fill="#989eac" d="M1028 830H1151Q1156 831 1155 837L1149 877Q1148 882 1142 884L1070 898Q1063 900 1059 893L1024 836Q1023 830 1028 830Z"/>
<path fill="#bfc3cb" d="M1173 830H1214Q1219 831 1221 836L1235 872Q1237 877 1235 882L1218 924Q1215 930 1208 930H1192Q1186 930 1183 925L1163 890Q1160 886 1161 880L1168 835Q1169 831 1173 830Z"/>
<path fill="#d2d4d8" d="M1237 830H1303V866H1252Q1247 866 1245 861L1236 835Z"/>
<path fill="#bfc3cb" d="M1251 884H1303V950L1260 952Q1255 952 1251 949L1234 937Q1230 933 1232 929L1244 889Q1246 885 1251 884Z"/>
<path fill="#989eac" d="M1067 912L1143 898Q1148 898 1151 902L1172 933Q1175 938 1173 943L1155 973Q1152 978 1146 978L1066 974Q1061 973 1061 967L1062 918Q1062 913 1067 912Z"/>
<path fill="#989eac" d="M1196 944H1213Q1218 944 1222 948L1240 960Q1245 964 1244 970L1228 1063Q1227 1069 1221 1070H1196Q1190 1070 1187 1065L1165 995Q1164 990 1166 984L1188 949Q1190 945 1196 944Z"/>
<path fill="#989eac" d="M1263 966L1303 964V1101L1247 1075Q1241 1072 1242 1066L1256 973Q1257 967 1263 966Z"/>
<path fill="#717c8d" d="M1064 987L1145 992Q1150 993 1152 998L1175 1069Q1176 1074 1173 1078L1121 1125Q1115 1130 1109 1124L1029 1036Q1026 1031 1029 1027L1056 992Q1059 987 1064 987Z"/>
<path fill="#485774" d="M928 1053L1006 1044Q1012 1043 1016 1048L1041 1075Q1044 1080 1041 1085L1013 1127Q1009 1132 1003 1133H928Z"/>
<path fill="#485774" d="M1052 1098Q1057 1093 1062 1098L1102 1139Q1105 1142 1105 1148L1101 1226H1046L1024 1149Q1022 1143 1025 1138Z"/>
<path fill="#213355" d="M928 1148H1001Q1007 1148 1009 1154L1028 1226H928Z"/>
<path fill="#dcdddf" d="M1190 1086H1234Q1240 1086 1246 1089L1295 1116Q1301 1119 1302 1126V1186Q1301 1223 1270 1226H1122Q1116 1225 1117 1219L1121 1148Q1122 1142 1126 1138L1180 1090Q1184 1086 1190 1086Z"/>
</svg>`);
out.push('<text class="brand" x="2713" y="1445" font-size="32" fill="#213355">FoamTree</text>');

document.getElementById("treemap").innerHTML = `<g transform="translate(0 -4)">${out.join("")}</g>`;
```
